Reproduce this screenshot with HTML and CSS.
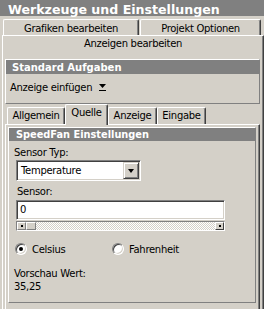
FILE: index.html
```html
<!DOCTYPE html>
<html lang="de">
<head>
    <meta charset="UTF-8">
    <meta name="viewport" content="width=device-width, initial-scale=1.0">
    <title>Werkzeuge und Einstellungen</title>
    <link rel="stylesheet" href="styles.css">
</head>
<body>
    <div class="caption">Werkzeuge und Einstellungen</div>

    <!-- Back row of the main tabs -->
    <div class="tabs-back">
        <div class="tab tab-grafiken">Grafiken bearbeiten</div>
        <div class="tab tab-projekt">Projekt Optionen</div>
    </div>

    <!-- Selected main tab and its page -->
    <div class="page">
        <div class="page-label">Anzeigen bearbeiten</div>

        <div class="group group-std">
            <div class="group-head">Standard Aufgaben</div>
            <div class="group-body">
                <span class="menu">Anzeige einfügen</span>
                <svg class="menu-arrow" width="8" height="10" viewBox="0 0 8 10">
                    <polygon points="0,1 7,1 3.5,5" fill="#000"/>
                    <rect x="0" y="7" width="7" height="1" fill="#000"/>
                </svg>
            </div>
        </div>

        <!-- Sub tabs -->
        <div class="subtabs">
            <div class="subtab st-allgemein">Allgemein</div>
            <div class="subtab st-quelle active">Quelle</div>
            <div class="subtab st-anzeige">Anzeige</div>
            <div class="subtab st-eingabe">Eingabe</div>
        </div>

        <div class="subpage">
            <div class="group group-sf">
                <div class="group-head head-sf">SpeedFan Einstellungen</div>
                <div class="fields">
                    <div class="lbl lbl-typ">Sensor Typ:</div>
                    <div class="combo">
                        <span class="combo-text">Temperature</span>
                        <span class="combo-btn"><span class="combo-tri"></span></span>
                    </div>

                    <div class="lbl lbl-sensor">Sensor:</div>
                    <div class="edit">0</div>
                    <div class="slider">
                        <span class="sbtn"><span class="sdot"></span></span>
                        <span class="sthumb"></span>
                        <span class="strack"></span>
                        <span class="sbtn sbtn-end"><span class="sdot"></span></span>
                    </div>

                    <div class="radios">
                        <div class="option">
                            <span class="radio checked"></span>
                            <span class="radio-text">Celsius</span>
                        </div>
                        <div class="option">
                            <span class="radio"></span>
                            <span class="radio-text">Fahrenheit</span>
                        </div>
                    </div>

                    <div class="lbl lbl-preview">Vorschau Wert:</div>
                    <div class="lbl">35,25</div>
                </div>
            </div>
        </div>
    </div>
</body>
</html>
```

FILE: styles.css
```css
* {
    box-sizing: border-box;
}

html,
body {
    margin: 0;
}

body {
    width: 264px;
    height: 309px;
    overflow: hidden;
    background-color: #d4d0c8;
    font-family: "DejaVu Sans", sans-serif;
    font-size: 10px;
    letter-spacing: -0.3px;
    color: #000;
}

/* Title bar */
.caption {
    height: 16px;
    padding: 2px 0 0 8px;
    line-height: 16px;
    background-color: #808080;
    color: #fff;
    font-weight: bold;
    font-size: 12.6px;
    letter-spacing: 0;
    white-space: nowrap;
}

/* Main tabs, back row */
.tabs-back {
    display: flex;
    gap: 1px;
    height: 19px;
    padding: 3px 0 0 3px;
}

.tab {
    height: 16px;
    padding-top: 1px;
    line-height: 15px;
    text-align: center;
    white-space: nowrap;
    border-top: 1px solid #fff;
    border-left: 1px solid #fff;
    border-right: 1px solid #404040;
    border-radius: 2px 2px 0 0;
    box-shadow: inset -1px 0 #808080;
}

.tab-grafiken {
    width: 136px;
}

.tab-projekt {
    width: 121px;
}

/* Page of the selected tab */
.page {
    margin-left: 2px;
    height: 274px;
    overflow: hidden;
    border-top: 1px solid #fff;
    border-left: 1px solid #fff;
    border-right: 1px solid #404040;
    box-shadow: inset -1px 0 #808080;
}

.page-label {
    height: 16px;
    line-height: 16px;
    text-align: center;
}

/* Group boxes */
.group {
    border-top: 1px solid #fff;
    border-left: 1px solid #fff;
    border-right: 1px solid #808080;
    border-bottom: 1px solid #808080;
}

.group-std {
    margin: 7px 3px 0 2px;
}

.group-head {
    height: 14px;
    padding: 1px 0 0 6px;
    line-height: 13px;
    background-color: #808080;
    color: #fff;
    font-weight: bold;
    font-size: 10px;
    letter-spacing: 0;
    white-space: nowrap;
}

.group-body {
    display: flex;
    align-items: flex-start;
    height: 29px;
    padding: 7px 0 0 4px;
    line-height: 13px;
}

.menu-arrow {
    margin: 2px 0 0 7px;
}

/* Sub tabs */
.subtabs {
    display: flex;
    align-items: flex-end;
    height: 20px;
    margin-left: 4px;
}

.subtab {
    position: relative;
    height: 17px;
    line-height: 15px;
    text-align: center;
    border-top: 1px solid #fff;
    border-left: 1px solid #fff;
    border-right: 1px solid #404040;
    border-radius: 2px 2px 0 0;
    box-shadow: inset -1px 0 #808080;
    background-color: #d4d0c8;
}

.subtab.active {
    height: 21px;
    margin-bottom: -1px;
    z-index: 1;
}

.st-allgemein {
    width: 58px;
}

.st-quelle {
    width: 43px;
}

.st-anzeige {
    width: 49px;
}

.st-eingabe {
    width: 49px;
}

.subpage {
    height: 185px;
    margin: 0 3px 0 2px;
    border-top: 1px solid #fff;
    border-left: 1px solid #fff;
    border-right: 1px solid #404040;
    box-shadow: inset -1px 0 #808080;
}

.group-sf {
    margin: 2px 3px 0 2px;
}

.head-sf {
    height: 13px;
    padding: 0 0 0 7px;
    font-size: 9.8px;
}

.fields {
    display: flex;
    flex-direction: column;
    align-items: flex-start;
    padding: 0 0 9px 5px;
}

.lbl {
    line-height: 13px;
    white-space: nowrap;
}

.lbl-typ {
    margin-top: 5px;
}

.lbl-sensor {
    margin: 4px 0 0 3px;
}

.lbl-preview {
    margin-top: 12px;
}

/* Sunken white fields */
.combo,
.edit {
    background-color: #fff;
    border: 1px solid;
    border-color: #808080 #fff #fff #808080;
    box-shadow: inset 1px 1px #404040, inset -1px -1px #d4d0c8;
}

.combo {
    display: flex;
    align-items: center;
    justify-content: space-between;
    width: 125px;
    height: 21px;
    margin: 1px 0 0 2px;
    padding: 1px;
}

.combo-text {
    padding-left: 3px;
    line-height: 17px;
}

.combo-btn {
    display: flex;
    align-items: center;
    justify-content: center;
    width: 16px;
    height: 17px;
    background-color: #d4d0c8;
    border: 1px solid;
    border-color: #d4d0c8 #404040 #404040 #d4d0c8;
    box-shadow: inset 1px 1px #fff, inset -1px -1px #808080;
}

.combo-tri {
    width: 0;
    height: 0;
    border-left: 3.5px solid transparent;
    border-right: 3.5px solid transparent;
    border-top: 4px solid #000;
}

.edit {
    width: 209px;
    height: 20px;
    margin: 2px 0 0 2px;
    padding-left: 3px;
    line-height: 18px;
}

/* Horizontal slider under the sensor field */
.slider {
    display: flex;
    width: 209px;
    height: 10px;
    margin: 1px 0 0 2px;
    border: 1px solid;
    border-color: #808080 #fff #fff #808080;
}

.sbtn,
.sthumb {
    display: flex;
    align-items: center;
    justify-content: center;
    flex: none;
    width: 9px;
    height: 8px;
    background-color: #d4d0c8;
    border: 1px solid;
    border-color: #fff #808080 #808080 #fff;
}

.sbtn-end {
    border-color: #fff #404040 #404040 #fff;
}

.sthumb {
    width: 10px;
}

.sdot {
    width: 2px;
    height: 2px;
    background-color: #000;
}

.strack {
    flex: 1;
    height: 8px;
    background-image: repeating-conic-gradient(#fff 0 25%, #d4d0c8 0 50%);
    background-size: 2px 2px;
}

/* Radio buttons */
.radios {
    display: grid;
    grid-template-columns: 97px 100px;
    align-self: stretch;
    height: 12px;
    margin: 12px 0 0 1px;
}

.option {
    display: flex;
    align-items: center;
    white-space: nowrap;
}

.radio {
    position: relative;
    flex: none;
    width: 12px;
    height: 12px;
    border-radius: 50%;
    background-color: #fff;
    border: 1px solid;
    border-color: #808080 #fff #fff #808080;
    box-shadow: inset 1px 1px #404040, inset -1px -1px #d4d0c8;
}

.radio.checked::after {
    content: "";
    position: absolute;
    top: 3px;
    left: 3px;
    width: 4px;
    height: 4px;
    border-radius: 50%;
    background-color: #000;
}

.radio-text {
    margin-left: 5px;
}
```
